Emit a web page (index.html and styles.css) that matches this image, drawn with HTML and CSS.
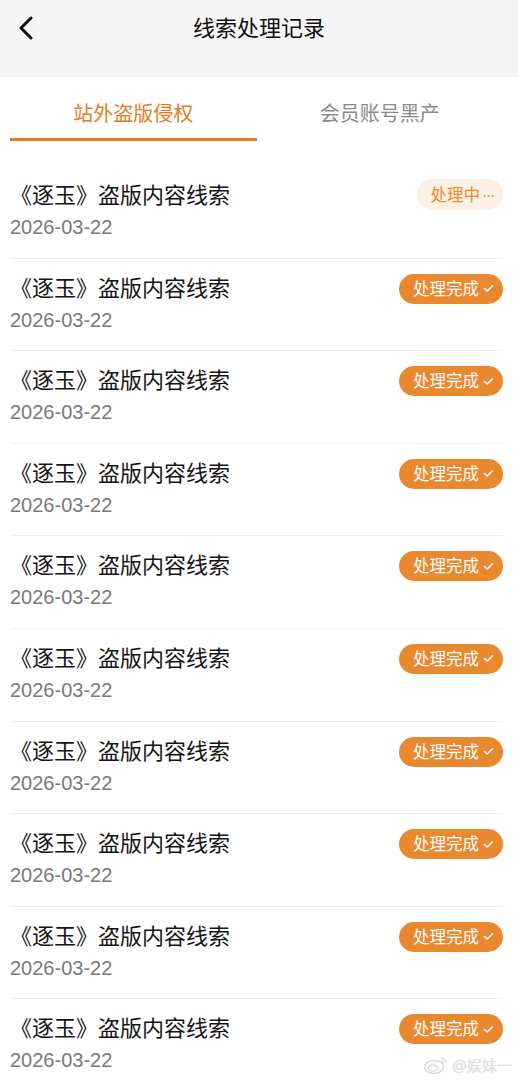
FILE: index.html
```html
<!DOCTYPE html>
<html lang="zh-CN">
<head>
    <meta charset="UTF-8">
    <meta name="viewport" content="width=device-width, initial-scale=1.0">
    <title>线索处理记录</title>
    <link rel="stylesheet" href="styles.css">
</head>
<body>
    <div class="nav">
        <div class="nav-bar">
            <a class="back-link" href="#">
                <svg width="16" height="26" viewBox="0 0 16 26"><polyline points="13,2 3,12 13,22" fill="none" stroke="#111" stroke-width="3" stroke-linecap="round" stroke-linejoin="round"/></svg>
            </a>
            <h1 class="nav-title">线索处理记录</h1>
        </div>
    </div>

    <div class="tabs">
        <div class="tab active"><span class="tab-label">站外盗版侵权</span><span class="tab-line"></span></div>
        <div class="tab"><span class="tab-label">会员账号黑产</span></div>
    </div>

    <div class="record-list" id="record-list"></div>

    <div class="watermark">
        <svg width="26" height="20" viewBox="0 0 26 20"><ellipse cx="11" cy="12" rx="9.5" ry="6.5" fill="none" stroke="#d8d8d8" stroke-width="1.5"/><ellipse cx="10" cy="13" rx="4.5" ry="3.2" fill="none" stroke="#d8d8d8" stroke-width="1.3"/><path d="M18 3 a5 5 0 0 1 5 5" fill="none" stroke="#d8d8d8" stroke-width="1.5"/><path d="M18 6 a2.5 2.5 0 0 1 2.5 2.5" fill="none" stroke="#d8d8d8" stroke-width="1.3"/></svg>
        <span>@娱妹一</span>
    </div>

    <script>
        document.addEventListener('DOMContentLoaded', function() {
            const list = document.getElementById('record-list');
            for (let i = 0; i < 10; i++) {
                const row = document.createElement('div');
                row.classList.add('record-item');

                const info = document.createElement('div');
                info.classList.add('record-info');
                info.innerHTML = '<p class="record-title">《逐玉》盗版内容线索</p><p class="record-date">2026-03-22</p>';
                row.appendChild(info);

                const badge = document.createElement('span');
                if (i === 0) {
                    badge.classList.add('badge', 'badge-pending');
                    badge.innerHTML = '处理中<span class="dots">···</span>';
                } else {
                    badge.classList.add('badge', 'badge-done');
                    badge.innerHTML = '处理完成<svg width="11" height="9" viewBox="0 0 11 9"><polyline points="1.5,4.5 4.2,7 9.5,1.8" fill="none" stroke="#fff" stroke-width="1.6" stroke-linecap="round" stroke-linejoin="round"/></svg>';
                }
                row.appendChild(badge);
                list.appendChild(row);
            }
        });
    </script>
</body>
</html>
```

FILE: styles.css
```css
body {
    font-family: "Liberation Sans", "Noto Sans CJK SC", sans-serif;
    background-color: #fff;
    margin: 0;
    padding: 0;
    overflow: hidden;
}
.nav {
    background-color: #f5f5f5;
    height: 77px;
}
.nav-bar {
    position: relative;
    height: 58px;
    display: flex;
    align-items: center;
    justify-content: center;
}
.back-link {
    position: absolute;
    left: 18px;
    top: 16px;
    display: block;
    line-height: 0;
}
.nav-title {
    margin: 0;
    font-size: 22px;
    font-weight: normal;
    color: #111;
    line-height: 30px;
}
.tabs {
    display: flex;
    padding: 0 15px 0 10px;
    height: 89px;
}
.tab {
    flex: 1;
    display: flex;
    flex-direction: column;
    align-items: center;
    padding-top: 23px;
}
.tab-label {
    font-size: 20px;
    line-height: 28px;
    color: #8a8a8a;
}
.tab.active .tab-label {
    color: #e27c22;
}
.tab-line {
    display: block;
    width: 100%;
    height: 3px;
    margin-top: 10px;
    background-color: #e27c22;
}
.record-list {
    padding: 0 15px 0 10px;
}
.record-item {
    box-sizing: border-box;
    height: 92.6px;
    border-bottom: 1px solid #ededed;
    display: flex;
    justify-content: space-between;
    align-items: flex-start;
}
.record-info {
    padding-top: 15px;
}
.record-title {
    margin: 0;
    font-size: 22px;
    line-height: 30px;
    color: #151515;
}
.record-date {
    margin: 4px 0 0;
    font-size: 20px;
    line-height: 25px;
    color: #7a7a7a;
}
.badge {
    margin-top: 15px;
    height: 30px;
    border-radius: 15px;
    font-size: 16.5px;
    line-height: 30px;
    display: flex;
    align-items: center;
    gap: 4px;
}
.badge-done {
    background-color: #e8892f;
    color: #fff;
    padding: 0 9px 0 14px;
}
.badge-pending {
    background-color: #fdf0e5;
    color: #e8892f;
    padding: 0 9px 0 14px;
    margin-top: 13px;
    height: 31px;
    gap: 2px;
}
.dots {
    letter-spacing: -1.5px;
}
.watermark {
    position: absolute;
    right: 6px;
    top: 1054px;
    display: flex;
    align-items: center;
    gap: 3px;
    font-size: 15px;
    color: #e2e2e2;
    text-shadow: 0 0 1px rgba(0,0,0,0.15);
}
```
